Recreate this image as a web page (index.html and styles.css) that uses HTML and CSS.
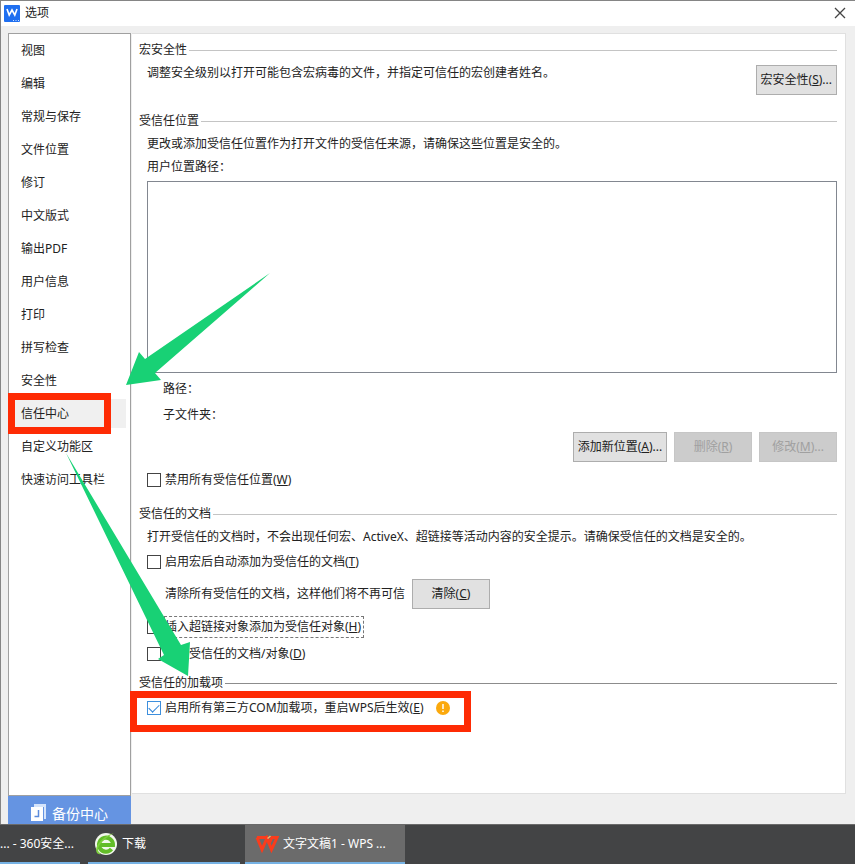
FILE: index.html
```html
<!DOCTYPE html>
<html lang="zh-CN">
<head>
    <meta charset="UTF-8">
    <meta name="viewport" content="width=device-width, initial-scale=1.0">
    <title>选项</title>
    <link rel="stylesheet" href="styles.css">
</head>
<body>
    <div class="dialog">
        <!--标题栏-->
        <header class="titlebar">
            <svg class="logo" width="16" height="17" viewBox="0 0 16 17">
                <rect width="16" height="17" rx="1" fill="#1f6ff0"/>
                <path d="M3 4l2.200 6L8 5l2.800 5L13 4" fill="none" stroke="#fff" stroke-width="1.6"/>
                <path d="M9 15.500h1M11.500 15.500h1M14 15.500h1" stroke="#cfe2ff"/>
            </svg>
            <h1>选项</h1>
            <button class="close" type="button" aria-label="关闭">
                <svg width="12" height="12" viewBox="0 0 12 12"><path d="M1 1l10 10M11 1L1 11" stroke="#444" stroke-width="1.3"/></svg>
            </button>
        </header>
        <div class="content">
            <!--左侧导航-->
            <aside class="side">
                <nav class="menu">
                    <a href="#">视图</a>
                    <a href="#">编辑</a>
                    <a href="#">常规与保存</a>
                    <a href="#">文件位置</a>
                    <a href="#">修订</a>
                    <a href="#">中文版式</a>
                    <a href="#">输出PDF</a>
                    <a href="#">用户信息</a>
                    <a href="#">打印</a>
                    <a href="#">拼写检查</a>
                    <a href="#">安全性</a>
                    <a href="#" class="active">信任中心<span class="mark mark-menu"></span></a>
                    <a href="#">自定义功能区</a>
                    <a href="#">快速访问工具栏</a>
                </nav>
                <button class="backup" type="button">
                    <svg width="16" height="18" viewBox="0 0 16 18">
                        <path d="M3 0h12v15h-2V3H3z" fill="#d5e4fb"/>
                        <rect y="3" width="12" height="14" fill="#fff"/>
                        <path d="M7.500 6v6.500h-4" fill="none" stroke="#5b8bdc" stroke-width="1.500"/>
                    </svg>
                    备份中心
                </button>
            </aside>
            <!--右侧设置-->
            <main class="panel">
                <section>
                    <h2>宏安全性</h2>
                    <div class="macro">
                        <p>调整安全级别以打开可能包含宏病毒的文件，并指定可信任的宏创建者姓名。</p>
                        <button class="btn" type="button">宏安全性(<u>S</u>)...</button>
                    </div>
                </section>
                <section>
                    <h2>受信任位置</h2>
                    <div class="group">
                        <p>更改或添加受信任位置作为打开文件的受信任来源，请确保这些位置是安全的。</p>
                        <p class="path-title">用户位置路径：</p>
                        <div class="list"></div>
                        <div class="detail">
                            <p>路径：</p>
                            <p>子文件夹：</p>
                        </div>
                        <div class="btns">
                            <button class="btn btn-add" type="button">添加新位置(<u>A</u>)...</button>
                            <button class="btn" type="button" disabled>删除(<u>R</u>)</button>
                            <button class="btn" type="button" disabled>修改(<u>M</u>)...</button>
                        </div>
                        <label class="check"><input type="checkbox"><span>禁用所有受信任位置(<u>W</u>)</span></label>
                    </div>
                </section>
                <section>
                    <h2>受信任的文档</h2>
                    <div class="group">
                        <p>打开受信任的文档时，不会出现任何宏、ActiveX、超链接等活动内容的安全提示。请确保受信任的文档是安全的。</p>
                        <label class="check check-auto"><input type="checkbox"><span>启用宏后自动添加为受信任的文档(<u>T</u>)</span></label>
                        <div class="clear">
                            <p>清除所有受信任的文档，这样他们将不再可信</p>
                            <button class="btn" type="button">清除(<u>C</u>)</button>
                        </div>
                        <label class="check"><input type="checkbox"><span class="focus">插入超链接对象添加为受信任对象(<u>H</u>)</span></label>
                        <label class="check check-doc"><input type="checkbox"><span>禁用受信任的文档/对象(<u>D</u>)</span></label>
                    </div>
                </section>
                <section>
                    <h2 class="dark">受信任的加载项</h2>
                    <div class="group addin">
                        <label class="check"><input type="checkbox" checked><span>启用所有第三方COM加载项，重启WPS后生效(<u>E</u>)</span></label>
                        <svg width="14" height="14" viewBox="0 0 14 14">
                            <circle cx="7" cy="7" r="7" fill="#fba90d"/>
                            <path d="M7 3v5M7 9.500v1.500" stroke="#fff" stroke-width="1.500"/>
                        </svg>
                        <span class="mark mark-addin"></span>
                    </div>
                </section>
            </main>
        </div>
    </div>
    <!--任务栏-->
    <footer class="taskbar">
        <button class="task task-360" type="button">... - 360安全...</button>
        <button class="task task-down" type="button">
            <svg width="24" height="24" viewBox="0 0 24 24">
                <circle cx="12" cy="12" r="11" fill="#f2f7ec"/>
                <path d="M6.500 13h12.500A7 7 0 1 0 17.500 17" fill="none" stroke="#62bd28" stroke-width="4"/>
                <path d="M3 21C-1 15 9 4 20 1C13 5 7 10 5 14C3 18 4 20 7 22C5 22.500 4 22 3 21z" fill="#7ed03e"/>
            </svg>
            下载
        </button>
        <button class="task task-wps" type="button">
            <svg width="24" height="18" viewBox="0 0 24 18">
                <path d="M2 2.500h9.500M2 2.500l5 12 5-11.500 4.500 11.500 5.500-12h-5l-3.500 7" fill="none" stroke="#fa3c1c" stroke-width="3"/>
                <path d="M12.500 3.500l3-2.500" stroke="#f7b06a" stroke-width="1.500"/>
            </svg>
            文字文稿1 - WPS ...
        </button>
    </footer>
    <!--箭头标注-->
    <svg class="arrows" width="300" height="700" viewBox="0 0 300 700">
        <path d="M126 385L139 352L145 359L270 273L155 373L161 380z"/>
        <path d="M66 453L181 645L190 642L188 676L158 659L164 655z"/>
    </svg>
</body>
</html>
```
FILE: styles.css
```css
*{
    margin:0;padding:0;
    box-sizing: border-box;
}
body{
    height:100vh;
    display: flex;
    flex-direction: column;
    position: relative;
    overflow: hidden;
    font:12px/20px "Noto Sans","Noto Sans CJK SC",sans-serif;
    color:#222;
}
button{
    font:inherit;
    color:inherit;
    border:0;
}
a{
    color:inherit;
    text-decoration: none;
}
.dialog{
    flex:1;
    min-height:0;
    display: flex;
    flex-direction: column;
    border-top:1px solid #858585;
    border-left:1px solid #858585;
    background-color: #efefef;
}
.titlebar{
    height:25px;
    display: flex;
    align-items: center;
    gap:5px;
    padding:0 9px 1px 3px;
    background-color: #fff;
}
.titlebar h1{
    flex:1;
    font-size:12px;
    font-weight: normal;
}
.close{
    width:12px;
    height:12px;
    background: none;
}
.close svg{
    display: block;
}
.content{
    flex:1;
    min-height:0;
    display: flex;
    padding:7px 9px 0 7px;
}
/*左侧*/
.side{
    width:123px;
    display: flex;
    flex-direction: column;
}
.menu{
    flex:1;
    padding-top:2px;
    border:1px solid #a0a0a0;
    background-color: #fff;
}
.menu a{
    display: block;
    position: relative;
    height:29px;
    margin:0 4px 4px 0;
    padding-left:12px;
    line-height: 29px;
}
.menu a.active{
    background-color: #f0f0f0;
}
.backup{
    height:28px;
    display: flex;
    justify-content: center;
    gap:5px;
    padding-top:8px;
    background-color: #6594e2;
    color:#fff;
    font-size:14px;
}
/*右侧*/
.panel{
    flex:1;
    min-width:0;
    margin:0 0 30px 1px;
    padding:6px 8px 0 7px;
    border:1px solid #e0e0e0;
    border-left:0;
    background-color: #fff;
}
.panel section{
    margin-bottom:16px;
}
.panel section:nth-child(2){
    margin-bottom:14px;
}
.panel section:nth-child(3){
    margin-bottom:9px;
}
.panel h2{
    display: flex;
    align-items: center;
    gap:2px;
    margin-bottom:3px;
    font-size:12px;
    font-weight: normal;
}
.panel h2::after{
    content:"";
    flex:1;
    height:1px;
    background-color: #c4c4c4;
}
.panel h2.dark::after{
    background-color: #8c8c8c;
}
.group,.macro{
    padding-left:8px;
}
.macro{
    display: flex;
    justify-content: space-between;
}
.btn{
    min-width:78px;
    height:30px;
    padding:0 4px;
    border:1px solid #adadad;
    background-color: #e1e1e1;
    white-space: nowrap;
}
.btn:disabled{
    border-color:#c6c6c6;
    background-color: #cccccc;
    color:#a0a0a0;
}
.macro .btn{
    margin-top:2px;
}
.path-title{
    margin-top:3px;
}
.list{
    height:192px;
    margin-top:4px;
    border:1px solid #828790;
    background-color: #fff;
}
.detail{
    display: flex;
    flex-direction: column;
    gap:6px;
    padding:6px 0 7px 16px;
}
.btns{
    display: flex;
    justify-content: flex-end;
    gap:7px;
    margin-bottom:8px;
}
.btn-add{
    min-width:94px;
    padding:0 3px;
}
.check{
    width:max-content;
    display: flex;
    align-items: center;
    gap:4px;
}
.check input{
    appearance: none;
    width:14px;
    height:14px;
    border:1px solid #444;
    background-color: #fff;
}
.check input:checked{
    border-color:#3d8fdd;
}
.check input:checked::before{
    content:"";
    display: block;
    width:9px;
    height:5px;
    margin:2px 0 0 1px;
    border:solid #2c82d8;
    border-width:0 0 1px 1px;
    transform: rotate(-45deg);
}
.check-auto{
    margin-top:5px;
}
.check-doc{
    margin-top:7px;
}
.clear{
    display: flex;
    align-items: center;
    gap:7px;
    margin:7px 0 8px;
    padding-left:18px;
}
.focus{
    padding-right:2px;
    outline:1px dashed #777;
}
.addin{
    display: flex;
    align-items: center;
    gap:12px;
    position: relative;
    margin-top:5px;
}
/*任务栏*/
.taskbar{
    height:40px;
    display: flex;
    border-top:1px solid #6a6a6a;
    background-color: #434445;
}
.task{
    display: flex;
    align-items: center;
    gap:4px;
    border-bottom:2px solid #76b2e4;
    background: none;
    color:#fff;
    white-space: nowrap;
}
.task-360{
    width:80px;
}
.task-down{
    width:152px;
    margin-left:8px;
    padding-left:6px;
}
.task-wps{
    width:160px;
    margin-left:5px;
    padding-left:10px;
    background-color: #6b6b6b;
}
/*红框和箭头*/
.mark{
    position: absolute;
    border:7px solid #fe2b04;
    pointer-events: none;
}
.mark-menu{
    top:-6px;
    left:-1px;
    width:103px;
    height:41px;
}
.mark-addin{
    top:-7px;
    left:-9px;
    width:341px;
    height:41px;
}
.arrows{
    position: absolute;
    top:0;
    left:0;
    fill:#18d175;
    pointer-events: none;
}
```
